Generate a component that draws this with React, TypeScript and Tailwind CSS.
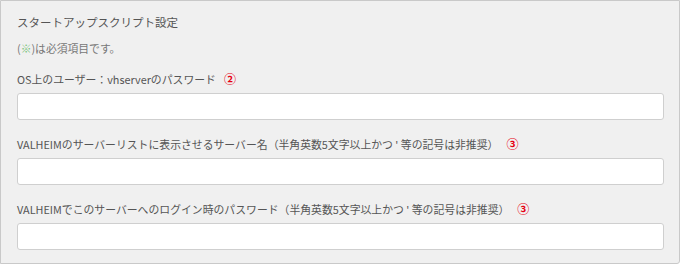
const font = { fontFamily: '"Noto Sans CJK JP", "Noto Sans", sans-serif' }

const fields = [
  { label: 'OS上のユーザー：vhserverのパスワード', mark: '②' },
  { label: "VALHEIMのサーバーリストに表示させるサーバー名（半角英数5文字以上かつ ' 等の記号は非推奨）", mark: '③' },
  { label: "VALHEIMでこのサーバーへのログイン時のパスワード（半角英数5文字以上かつ ' 等の記号は非推奨）", mark: '③' },
]

export default function App() {
  return (
    <div className="w-[680px] h-[265px] bg-white" style={font}>
      <div className="w-[680px] h-[264px] bg-[#f0f0f0] border border-[#c9c9c9] rounded-br-[3px] pt-[13px] pl-4 pr-[15px]">
        <div className="text-[11.5px] leading-4 text-[#555]">スタートアップスクリプト設定</div>
        <div className="mt-[10px] text-[10.8px] leading-4 text-[#777]">
          (<span className="text-[#7dc47d]">※</span>)は必須項目です。
        </div>
        <div className="flex flex-col gap-4 mt-[15px]">
          {fields.map((f, i) => (
            <div key={i}>
              <div className="text-[10.85px] leading-4 text-[#555] whitespace-nowrap">
                {f.label}
                <span className="ml-[8px] text-[12px] text-[#e60012] font-semibold">{f.mark}</span>
              </div>
              <input
                type="text"
                className="mt-[6px] block w-full h-[27px] bg-white border border-[#cfcfcf] rounded-[3px] outline-none"
              />
            </div>
          ))}
        </div>
      </div>
    </div>
  )
}
